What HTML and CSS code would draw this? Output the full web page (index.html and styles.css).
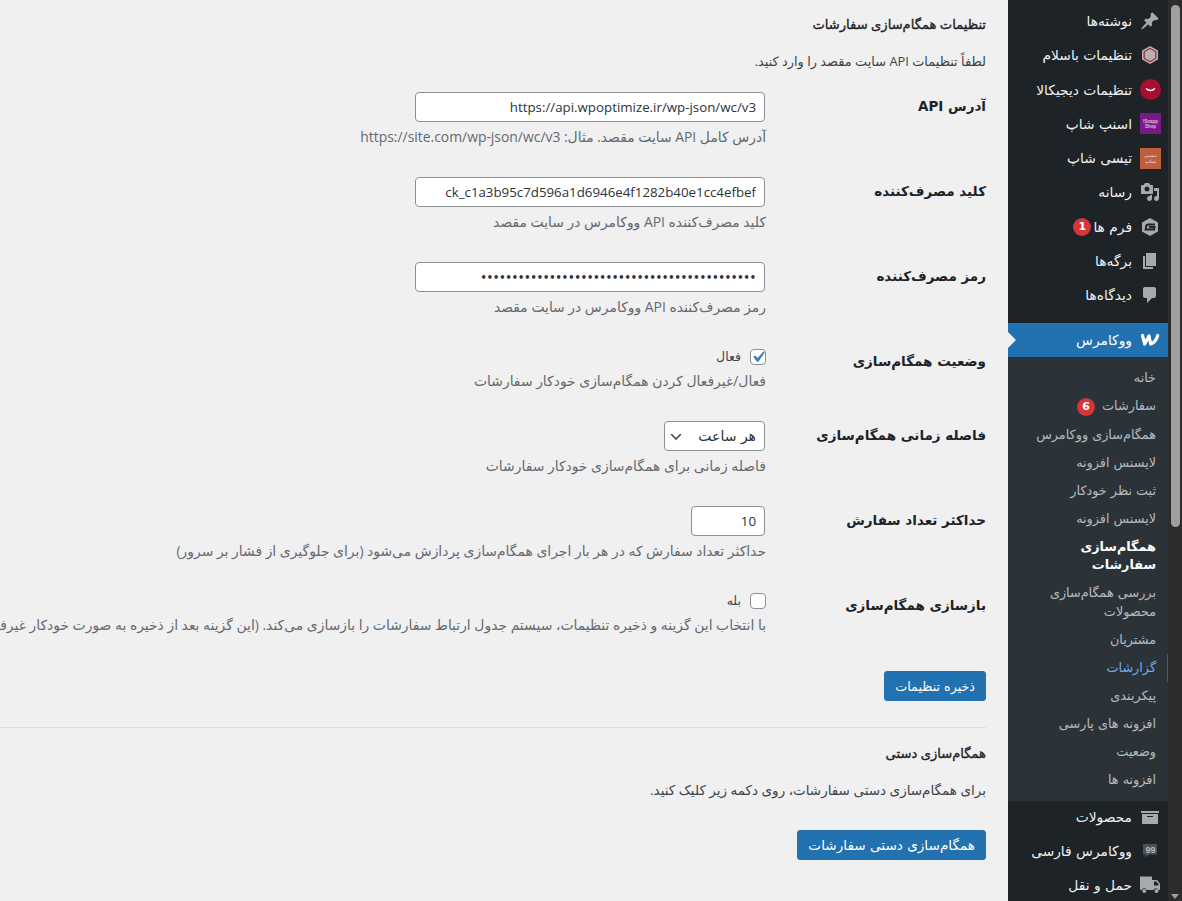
FILE: index.html
```html
<!DOCTYPE html>
<html lang="fa" dir="rtl">
<head>
<meta charset="utf-8">
<title>تنظیمات همگام‌سازی سفارشات</title>
<link rel="stylesheet" href="styles.css">
</head>
<body>
<div class="page">
  <div class="scrollbar"><div class="thumb"></div><div class="arrow"></div></div>
  <nav class="side">
    <ul class="menu">
      <li class="item"><svg class="ic" viewBox="0 0 20 20"><path d="M10.44 3.02l1.82-1.82 6.36 6.35-1.83 1.82c-1.05-.68-2.48-.57-3.41.36l-.75.75c-.92.93-1.04 2.35-.35 3.41l-1.83 1.82-2.41-2.41-2.8 2.79c-.42.42-3.38 2.71-3.8 2.29s1.86-3.39 2.28-3.81l2.79-2.79L4.1 9.36l1.83-1.82c1.05.69 2.48.57 3.4-.36l.75-.75c.93-.92 1.05-2.35.36-3.41z"/></svg><span>نوشته‌ها</span></li>
      <li class="item"><svg class="ic" viewBox="0 0 20 20"><path class="red" d="M10 1l8 4.500v9L10 19l-8-4.500v-9z"/><path class="dark" d="M10 2.800l6.400 3.600v7.200L10 17.200l-6.400-3.600V6.400z"/><path class="hexin" d="M10 4l5.200 3v6L10 16l-5.200-3V7z"/></svg><span>تنظیمات باسلام</span></li>
      <li class="item"><svg class="ic big" viewBox="0 0 21 21"><circle class="crimson" cx="10.500" cy="10.500" r="10.500"/><path class="smile" d="M6.500 9.800c2 2.200 6 2.200 8 0"/></svg><span>تنظیمات دیجیکالا</span></li>
      <li class="item"><svg class="ic big" viewBox="0 0 21 21"><rect class="purple" width="21" height="21"/><text class="logo" x="10.500" y="9.500">Snapp!</text><text class="logo" x="10.500" y="14.500">Shop</text></svg><span>اسنپ شاپ</span></li>
      <li class="item"><svg class="ic big" viewBox="0 0 21 21"><rect class="orange" width="21" height="21"/><text class="logo" x="10.500" y="9">تیسی</text><text class="logo" x="10.500" y="15">شاپ</text></svg><span>تیسی شاپ</span></li>
      <li class="item"><svg class="ic" viewBox="0 0 20 20"><path d="M13 11V4c0-.55-.45-1-1-1h-1.67L9 1H5L3.67 3H2c-.55 0-1 .45-1 1v7c0 .55.45 1 1 1h10c.55 0 1-.45 1-1zM7 4.500c1.38 0 2.500 1.120 2.500 2.500S8.380 9.500 7 9.500 4.500 8.380 4.500 7 5.620 4.500 7 4.500zM14 6h5v10.500c0 1.380-1.120 2.500-2.500 2.500S14 17.880 14 16.500s1.120-2.500 2.500-2.500c.17 0 .34.02.5.05V9h-3V6zm-4 8.050V13h2v3.500c0 1.380-1.120 2.500-2.500 2.500S7 17.880 7 16.500 8.120 14 9.500 14c.17 0 .34.02.5.05z"/></svg><span>رسانه</span></li>
      <li class="item"><svg class="ic" viewBox="0 0 20 20"><path d="M10 1l8 4.500v9L10 19l-8-4.500v-9z"/><path class="gf" d="M15 7.500H8.500C7 7.500 6.200 8.500 6 10l-.4 2.500h8.600l.4-2.500H9"/></svg><span>فرم ها</span><b class="badge">1</b></li>
      <li class="item"><svg class="ic" viewBox="0 0 20 20"><path d="M6 15V2h10v13H6zm-1 1h8v2H3V5h2v11z"/></svg><span>برگه‌ها</span></li>
      <li class="item"><svg class="ic" viewBox="0 0 20 20"><path d="M5 2h9c1.100 0 2 .9 2 2v7c0 1.100-.9 2-2 2h-2l-5 5v-5H5c-1.100 0-2-.9-2-2V4c0-1.100.9-2 2-2z"/></svg><span>دیدگاه‌ها</span></li>
      <li class="item active"><svg class="ic woo" viewBox="0 0 20 14"><path class="woow" d="M2.500 2.500l2.200 8.500 4.300-8 1.700 8c3-1 5.800-4 7-8.500"/></svg><span>ووکامرس</span></li>
    </ul>
    <ul class="sub">
      <li>خانه</li>
      <li>سفارشات<b class="badge">6</b></li>
      <li>همگام‌سازی ووکامرس</li>
      <li>لایسنس افزونه</li>
      <li>ثبت نظر خودکار</li>
      <li>لایسنس افزونه</li>
      <li class="cur">همگام‌سازی سفارشات</li>
      <li>بررسی همگام‌سازی محصولات</li>
      <li>مشتریان</li>
      <li class="hover">گزارشات</li>
      <li>پیکربندی</li>
      <li>افزونه های پارسی</li>
      <li>وضعیت</li>
      <li>افزونه ها</li>
    </ul>
    <ul class="menu after">
      <li class="item"><svg class="ic" viewBox="0 0 20 20"><path d="M19 4v2H1V4h18zM2 7h16v10H2V7zm11 3V9H7v1h6z"/></svg><span>محصولات</span></li>
      <li class="item"><svg class="ic" viewBox="0 0 20 20"><path class="quote" d="M3 3h14v10.500H9l-3.500 3v-3H3z"/><text class="q99" x="10.500" y="11.500">99</text></svg><span>ووکامرس فارسی</span></li>
      <li class="item"><svg class="ic" viewBox="0 0 20 20"><path d="M1 1.500h10c.6 0 1 .4 1 1V5h4.500c.5 0 .9.200 1.200.6l2 2.800c.2.300.3.600.3 1V14c0 .6-.4 1-1 1h-.6a2.500 2.500 0 0 0-4.800 0H6.500a2.500 2.500 0 0 0-4.800 0H1c-.6 0-1-.4-1-1V2.500c0-.6.400-1 1-1z"/><path class="cab" d="M14 6.500h2.500l2 3v1H14z"/><circle cx="4.200" cy="16" r="2"/><circle cx="16.500" cy="16" r="2"/></svg><span>حمل و نقل</span></li>
    </ul>
  </nav>
  <main class="main">
    <h2 class="title">تنظیمات همگام‌سازی سفارشات</h2>
    <p class="intro">لطفاً تنظیمات API سایت مقصد را وارد کنید.</p>
    <div class="row">
      <label class="th">آدرس API</label>
      <div class="td">
        <input class="text" type="text" value="https://api.wpoptimize.ir/wp-json/wc/v3">
        <p class="desc">آدرس کامل API سایت مقصد. مثال: https://site.com/wp-json/wc/v3</p>
      </div>
    </div>
    <div class="row">
      <label class="th">کلید مصرف‌کننده</label>
      <div class="td">
        <input class="text" type="text" value="ck_c1a3b95c7d596a1d6946e4f1282b40e1cc4efbef">
        <p class="desc">کلید مصرف‌کننده API ووکامرس در سایت مقصد</p>
      </div>
    </div>
    <div class="row">
      <label class="th">رمز مصرف‌کننده</label>
      <div class="td">
        <input class="text pass" type="password" value="cs_1a2b3c4d5e6f7a8b9c0d1e2f3a4b5c6d7e8f9a0b1">
        <p class="desc">رمز مصرف‌کننده API ووکامرس در سایت مقصد</p>
      </div>
    </div>
    <div class="row short">
      <label class="th">وضعیت همگام‌سازی</label>
      <div class="td">
        <label class="check"><input class="cb" type="checkbox" checked><span>فعال</span></label>
        <p class="desc">فعال/غیرفعال کردن همگام‌سازی خودکار سفارشات</p>
      </div>
    </div>
    <div class="row">
      <label class="th">فاصله زمانی همگام‌سازی</label>
      <div class="td">
        <select class="select"><option>هر ساعت</option></select>
        <p class="desc">فاصله زمانی برای همگام‌سازی خودکار سفارشات</p>
      </div>
    </div>
    <div class="row">
      <label class="th">حداکثر تعداد سفارش</label>
      <div class="td">
        <input class="number" type="text" value="10">
        <p class="desc">حداکثر تعداد سفارش که در هر بار اجرای همگام‌سازی پردازش می‌شود (برای جلوگیری از فشار بر سرور)</p>
      </div>
    </div>
    <div class="row last">
      <label class="th">بازسازی همگام‌سازی</label>
      <div class="td">
        <label class="check"><input class="cb" type="checkbox"><span>بله</span></label>
        <p class="desc">با انتخاب این گزینه و ذخیره تنظیمات، سیستم جدول ارتباط سفارشات را بازسازی می‌کند. (این گزینه بعد از ذخیره به صورت خودکار غیرفعال می‌شود)</p>
      </div>
    </div>
    <div class="actions"><button class="btn">ذخیره تنظیمات</button></div>
    <hr class="sep">
    <h3 class="title2">همگام‌سازی دستی</h3>
    <p class="intro2">برای همگام‌سازی دستی سفارشات، روی دکمه زیر کلیک کنید.</p>
    <div class="actions2"><button class="btn wide">همگام‌سازی دستی سفارشات</button></div>
  </main>
</div>
</body>
</html>
```
FILE: styles.css
```css
* { box-sizing: border-box; }
html, body { margin: 0; padding: 0; height: 100%; overflow: hidden; }
body { background: #f0f0f1; color: #3c434a; font-family: "Open Sans", "DejaVu Sans", sans-serif; font-size: 13px; }
.page { display: flex; height: 901px; width: 1182px; overflow: hidden; }
.scrollbar { flex: 0 0 14px; background: #2c2c2c; padding: 5px 2px 0 3px; position: relative; }
.thumb { height: 522px; background: #9f9f9f; border-radius: 5px; }
.arrow { position: absolute; left: 3px; bottom: 2px; width: 0; height: 0; border-style: solid; border-width: 5px 4px 0; border-color: #9f9f9f transparent transparent; }
.side { flex: 0 0 160px; background: #1d2327; color: #f0f0f1; }
ul { list-style: none; margin: 0; padding: 0; }
.menu { padding-top: 4px; }
.item { display: flex; align-items: center; height: 34.250px; padding-right: 8px; gap: 8px; font-family: "DejaVu Sans", sans-serif; font-size: 13.800px; white-space: nowrap; position: relative; }
.ic { flex: 0 0 20px; width: 20px; height: 20px; fill: #a7aaad; }
.ic.big { width: 21px; height: 21px; flex-basis: 21px; margin-right: -1px; }
.red { fill: #c9a3ab; }
.dark { fill: #8a2f40; }
.hexin { fill: #b3b3b7; }
.crimson { fill: #a80f2e; }
.smile { fill: none; stroke: #fff; stroke-width: 1.400; stroke-linecap: round; }
.purple { fill: #7a1a8a; }
.orange { fill: #bf5f3c; }
.logo { fill: #e0bfd0; font-family: "Liberation Sans", "DejaVu Sans", sans-serif; font-size: 4.500px; text-anchor: middle; font-weight: 700; }
.gf { fill: none; stroke: #1d2327; stroke-width: 1.800; }
.quote { fill: #4b5055; }
.q99 { fill: #b5b8bb; font-family: "Liberation Sans", sans-serif; font-size: 9px; font-weight: 700; text-anchor: middle; }
.cab { fill: #1d2327; }
.active { background: #2271b1; color: #fff; margin-top: 11px; height: 34px; }
.active::after { content: ""; position: absolute; left: 0; top: 9px; border-style: solid; border-width: 8px 0 8px 8px; border-color: transparent transparent transparent #f0f0f1; }
.woo { height: 14px; }
.woow { fill: none; stroke: #fff; stroke-width: 3.200; stroke-linejoin: round; stroke-linecap: round; }
.sub { background: #2c3338; padding: 7px 0 6.600px; color: rgba(240,246,252,.7); font-family: "DejaVu Sans", sans-serif; font-size: 12.800px; }
.sub li { padding: 5px 12px; line-height: 18.100px; position: relative; }
.sub .cur { color: #fff; font-weight: 700; padding-left: 40px; }
.sub .hover { color: #72aee6; }
.sub .hover::after { content: ""; position: absolute; top: 0; bottom: 0; right: 0; width: 1px; background: #3b5f80; }
.after { padding-top: 0; }
.after .item { padding-bottom: 2px; }
.badge { display: inline-block; width: 18px; height: 18px; line-height: 18px; border-radius: 50%; background: #d63638; color: #fff; font-size: 11px; text-align: center; font-weight: 700; margin-right: 7px; vertical-align: middle; }
.item .badge { margin-right: -6px; }
.main { flex: 0 0 1008px; padding: 15px 22px 0 0; overflow: hidden; }
.title { margin: 0; font-size: 13.100px; line-height: 18px; font-weight: 400; color: #1d2327; -webkit-text-stroke: .35px #1d2327; }
.intro { margin: 19px 0 0; font-size: 12.900px; line-height: 18px; }
.row { display: flex; height: 85px; }
.short { height: 74px; }
.last { height: 75px; }
.main > .row:first-of-type { margin-top: 7px; }
.th { flex: 0 0 220px; padding-top: 20px; font-family: "DejaVu Sans", sans-serif; font-size: 13.500px; line-height: 18px; font-weight: 700; color: #1d2327; white-space: nowrap; }
.td { padding-top: 15px; flex: 0 0 800px; min-width: 0; }
.text { display: block; width: 350px; height: 30px; direction: ltr; text-align: right; margin-right: 1px; }
.text, .number, .select { border: 1px solid #8c8f94; border-radius: 4px; background: #fff; color: #2c3338; font: 13.300px/20px "Open Sans", sans-serif; padding: 0 8px; outline: 0; }
.text.pass { font-family: "DejaVu Sans", sans-serif; font-size: 9.800px; font-weight: 700; }
.number { display: block; width: 74px; height: 30px; direction: ltr; text-align: right; margin-right: 1px; }
.select { display: block; width: 101px; height: 30px; margin-right: 1px; appearance: none; font-family: "DejaVu Sans", sans-serif; font-size: 14px; padding: 0 8px 0 24px; background: #fff url("data:image/svg+xml,%3Csvg xmlns='http://www.w3.org/2000/svg' width='20' height='20'%3E%3Cpath d='M5 6l5 5 5-5 2 1-7 7-7-7z' fill='%23555'/%3E%3C/svg%3E") no-repeat left 3px top 55% / 16px 16px; }
.desc { margin: 4.500px 0 0; font-size: 13.900px; line-height: 20px; color: #646970; white-space: nowrap; }
.check { display: flex; align-items: center; gap: 9px; height: 19px; font-size: 12.500px; }
.cb { appearance: none; margin: 0; width: 16px; height: 16px; border: 1px solid #8c8f94; border-radius: 4px; background: #fff; flex: none; }
.cb:checked { background: #fff url("data:image/svg+xml,%3Csvg xmlns='http://www.w3.org/2000/svg' viewBox='0 0 20 20'%3E%3Cpath d='M14.830 4.890l1.340.940-5.810 8.380H9.020L5.780 9.670l1.340-1.250 2.570 2.400z' fill='%233582c4'/%3E%3C/svg%3E") no-repeat center / 22px 22px; }
.actions { padding-top: 20px; }
.btn { display: block; height: 30px; padding: 0 10px; border: 1px solid #2271b1; border-radius: 3px; background: #2271b1; color: #fff; font-family: "DejaVu Sans", sans-serif; font-size: 12.700px; }
.btn.wide { font-size: 13.600px; }
.sep { margin: 26px 0 0; border: 0; border-top: 1px solid #dcdcde; height: 0; }
.title2 { margin: 16px 0 0; font-size: 13.100px; line-height: 18px; font-weight: 400; color: #1d2327; -webkit-text-stroke: .35px #1d2327; }
.intro2 { margin: 19px 0 0; font-size: 13.500px; line-height: 18px; }
.actions2 { padding-top: 31px; }
```
